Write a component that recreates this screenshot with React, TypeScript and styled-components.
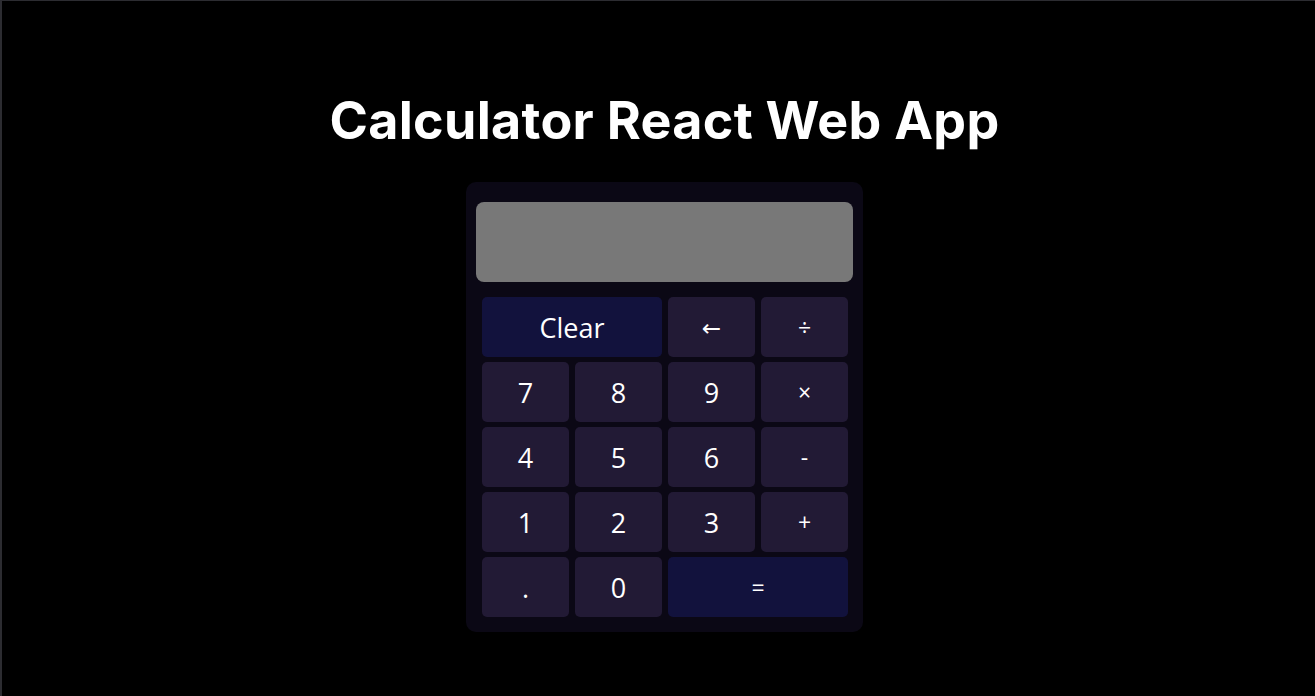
import React, { useState } from 'react';
import styled, { createGlobalStyle } from 'styled-components';

const GlobalStyle = createGlobalStyle`
  * {
    box-sizing: border-box;
  }

  html, body {
    margin: 0;
    padding: 0;
    background: #000;
  }
`;

const Page = styled.div`
  min-height: 696px;
  background: #000;
  border-top: 1px solid #2c2c31;
  border-left: 2px solid #2c2c31;
  display: flex;
  flex-direction: column;
  align-items: center;
  padding: 89px 0 0 12px;
`;

const Title = styled.h1`
  margin: 0 0 30px;
  font-family: 'Inter', 'Lato', sans-serif;
  font-weight: 700;
  font-size: 52px;
  letter-spacing: 0.3px;
  line-height: 1.2;
  color: #fff;
`;

const Calculator = styled.div`
  width: 397px;
  background: #0b0815;
  border-radius: 10px;
  padding: 20px 10px 15px;
`;

const Display = styled.div`
  height: 80px;
  background: #787878;
  border-radius: 8px;
  margin-bottom: 15px;
  color: #fff;
  font-family: 'Open Sans', sans-serif;
  font-size: 32px;
  display: flex;
  align-items: center;
  justify-content: flex-end;
  padding: 0 16px;
`;

const Keypad = styled.div`
  display: grid;
  grid-template-columns: repeat(4, 87px);
  grid-auto-rows: 60px;
  column-gap: 6px;
  row-gap: 5px;
  padding: 0 6px;
`;

const Key = styled.button<{ $accent?: boolean; $wide?: boolean; $small?: boolean }>`
  grid-column: ${({ $wide }) => ($wide ? 'span 2' : 'auto')};
  border: none;
  border-radius: 5px;
  background: ${({ $accent }) => ($accent ? '#12123d' : '#221a35')};
  color: #fff;
  font-family: 'Open Sans', 'DejaVu Sans', sans-serif;
  font-size: ${({ $small }) => ($small ? '23px' : '27px')};
  cursor: pointer;
  display: flex;
  align-items: center;
  justify-content: center;
  padding: 0;

  &:hover {
    filter: brightness(1.15);
  }
`;

type KeyDef = { label: string; accent?: boolean; wide?: boolean; small?: boolean };

const keys: KeyDef[] = [
  { label: 'Clear', accent: true, wide: true },
  { label: '←', small: true },
  { label: '÷', small: true },
  { label: '7' },
  { label: '8' },
  { label: '9' },
  { label: '×', small: true },
  { label: '4' },
  { label: '5' },
  { label: '6' },
  { label: '-', small: true },
  { label: '1' },
  { label: '2' },
  { label: '3' },
  { label: '+', small: true },
  { label: '.' },
  { label: '0' },
  { label: '=', accent: true, wide: true, small: true },
];

export default function App() {
  const [value, setValue] = useState('');

  const press = (label: string) => {
    if (label === 'Clear') return setValue('');
    if (label === '←') return setValue((v) => v.slice(0, -1));
    if (label === '=') {
      try {
        const expr = value.replace(/×/g, '*').replace(/÷/g, '/');
        // eslint-disable-next-line no-new-func
        setValue(String(Function(`return (${expr})`)()));
      } catch {
        setValue('Error');
      }
      return;
    }
    setValue((v) => v + label);
  };

  return (
    <>
      <GlobalStyle />
      <Page>
        <Title>Calculator React Web App</Title>
        <Calculator>
          <Display>{value}</Display>
          <Keypad>
            {keys.map((k) => (
              <Key
                key={k.label}
                $accent={k.accent}
                $wide={k.wide}
                $small={k.small}
                onClick={() => press(k.label)}
              >
                {k.label}
              </Key>
            ))}
          </Keypad>
        </Calculator>
      </Page>
    </>
  );
}
